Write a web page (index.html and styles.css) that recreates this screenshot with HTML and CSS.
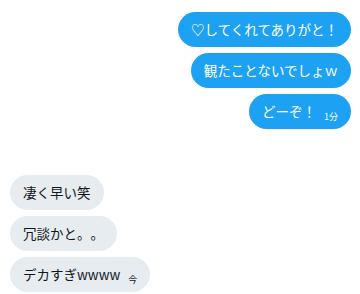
FILE: index.html
```html
<!DOCTYPE html>
<html lang="ja">
<head>
  <meta charset="UTF-8">
  <title>Messages</title>
  <link rel="stylesheet" href="styles.css">
</head>
<body>

  <div class="chat">
    <!-- sent -->
    <div class="msg sent">♡してくれてありがと！</div>
    <div class="msg sent">観たことないでしょｗ</div>
    <div class="msg sent">どーぞ！<span class="time">1分</span></div>

    <!-- received -->
    <div class="msg recv first">凄く早い笑</div>
    <div class="msg recv">冗談かと。。</div>
    <div class="msg recv">デカすぎwwww<span class="time">今</span></div>
  </div>

</body>
</html>
```

FILE: styles.css
```css
body {
  font-family: "Noto Sans CJK JP", "Noto Sans", sans-serif;
  background-color: #fff;
  margin: 0;
  color: #14171a;
}
.chat {
  display: flex;
  flex-direction: column;
  gap: 6px;
  padding: 12px 9px 0 10px;
}
.msg {
  font-size: 13.5px;
  line-height: 19px;
  padding: 8px 13px;
  border-radius: 18px;
  white-space: nowrap;
  text-spacing-trim: space-all;
}
.sent {
  align-self: flex-end;
  background-color: #1da1f2;
  color: #fff;
}
.recv {
  align-self: flex-start;
  background-color: #e6ecf0;
}
.recv.first {
  margin-top: 40px;
}
.time {
  font-size: 9px;
  line-height: 9px;
  margin-left: 8px;
  vertical-align: -3px;
}
.recv .time {
  color: #14171a;
}
```
